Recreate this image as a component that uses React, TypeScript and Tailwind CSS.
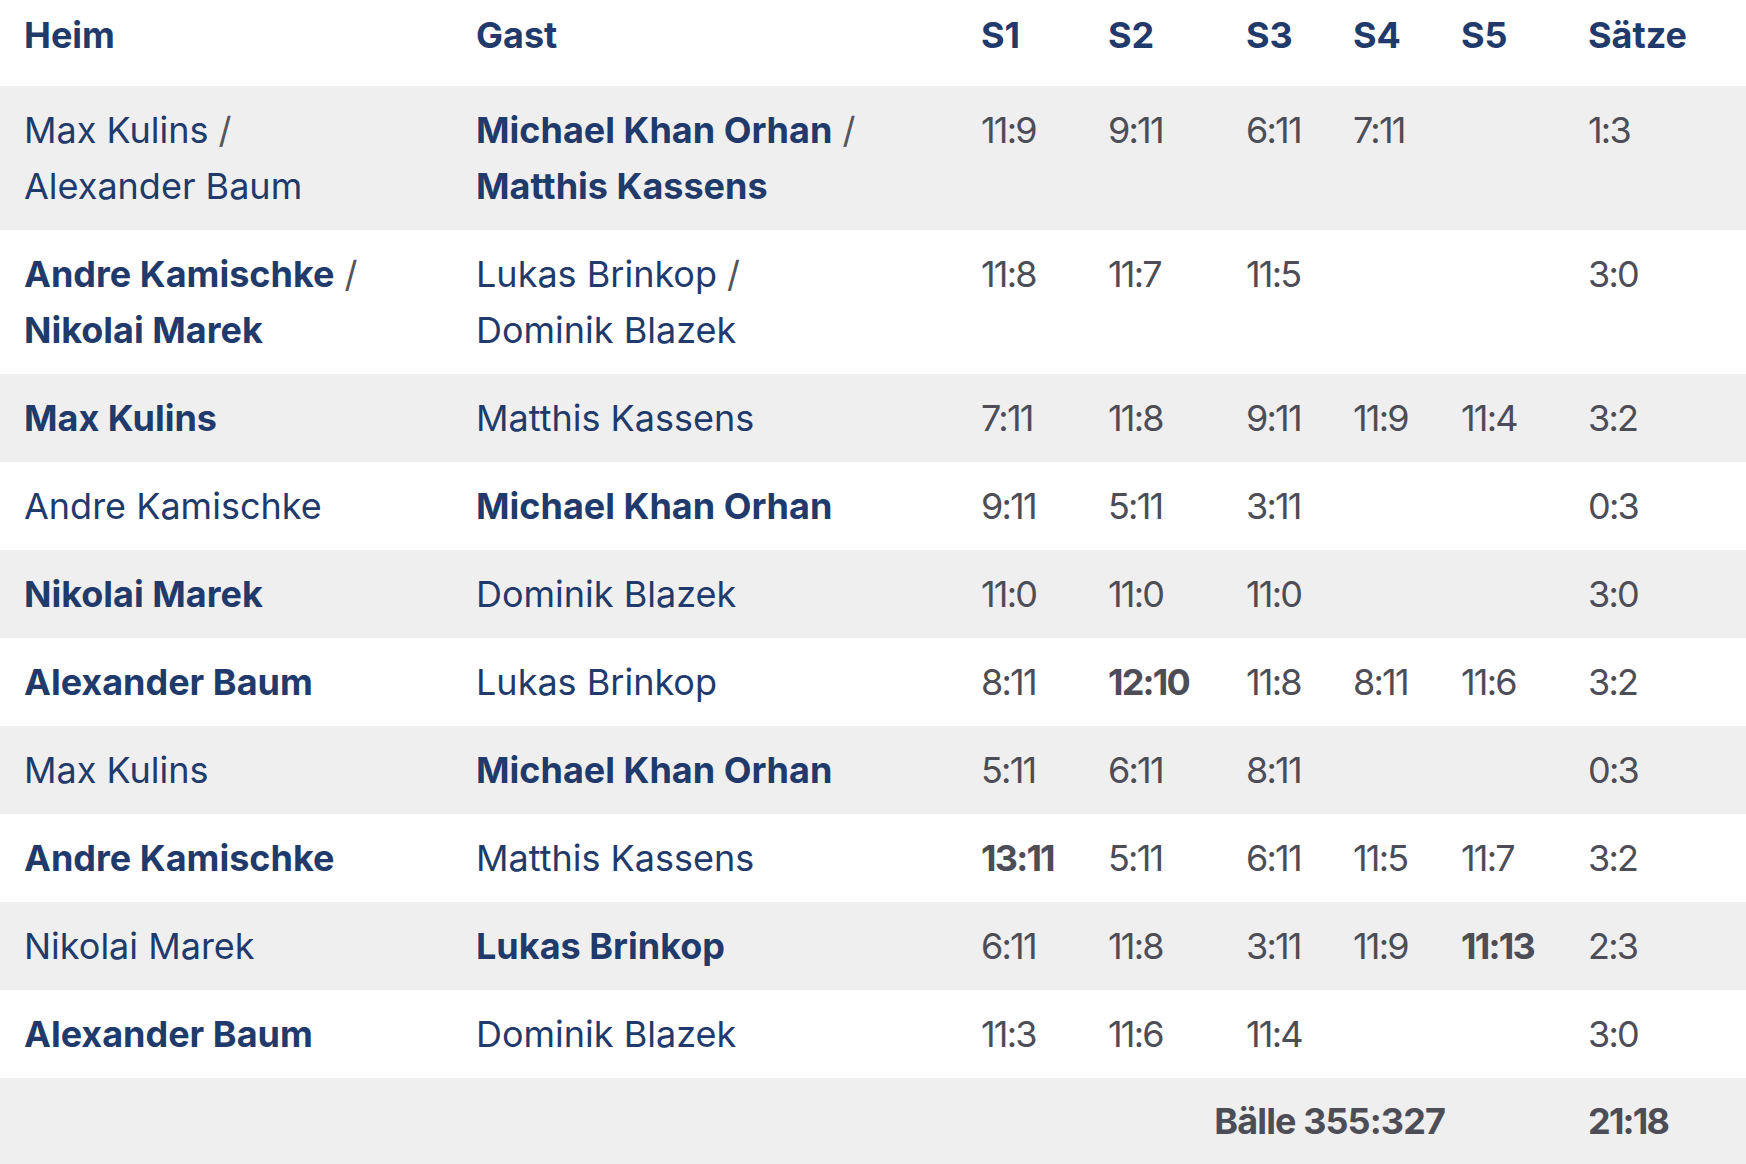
const COLS =
  "grid grid-cols-[452px_505px_127px_138px_107px_108px_127px_1fr] pl-[24px]";

type Name = { n: string; b?: boolean };
type Score = { s: string; b?: boolean } | null;

type Match = {
  home: Name[];
  away: Name[];
  sets: Score[];
  result: string;
};

const MATCHES: Match[] = [
  {
    home: [{ n: "Max Kulins" }, { n: "Alexander Baum" }],
    away: [
      { n: "Michael Khan Orhan", b: true },
      { n: "Matthis Kassens", b: true },
    ],
    sets: [{ s: "11:9" }, { s: "9:11" }, { s: "6:11" }, { s: "7:11" }, null],
    result: "1:3",
  },
  {
    home: [
      { n: "Andre Kamischke", b: true },
      { n: "Nikolai Marek", b: true },
    ],
    away: [{ n: "Lukas Brinkop" }, { n: "Dominik Blazek" }],
    sets: [{ s: "11:8" }, { s: "11:7" }, { s: "11:5" }, null, null],
    result: "3:0",
  },
  {
    home: [{ n: "Max Kulins", b: true }],
    away: [{ n: "Matthis Kassens" }],
    sets: [{ s: "7:11" }, { s: "11:8" }, { s: "9:11" }, { s: "11:9" }, { s: "11:4" }],
    result: "3:2",
  },
  {
    home: [{ n: "Andre Kamischke" }],
    away: [{ n: "Michael Khan Orhan", b: true }],
    sets: [{ s: "9:11" }, { s: "5:11" }, { s: "3:11" }, null, null],
    result: "0:3",
  },
  {
    home: [{ n: "Nikolai Marek", b: true }],
    away: [{ n: "Dominik Blazek" }],
    sets: [{ s: "11:0" }, { s: "11:0" }, { s: "11:0" }, null, null],
    result: "3:0",
  },
  {
    home: [{ n: "Alexander Baum", b: true }],
    away: [{ n: "Lukas Brinkop" }],
    sets: [{ s: "8:11" }, { s: "12:10", b: true }, { s: "11:8" }, { s: "8:11" }, { s: "11:6" }],
    result: "3:2",
  },
  {
    home: [{ n: "Max Kulins" }],
    away: [{ n: "Michael Khan Orhan", b: true }],
    sets: [{ s: "5:11" }, { s: "6:11" }, { s: "8:11" }, null, null],
    result: "0:3",
  },
  {
    home: [{ n: "Andre Kamischke", b: true }],
    away: [{ n: "Matthis Kassens" }],
    sets: [{ s: "13:11", b: true }, { s: "5:11" }, { s: "6:11" }, { s: "11:5" }, { s: "11:7" }],
    result: "3:2",
  },
  {
    home: [{ n: "Nikolai Marek" }],
    away: [{ n: "Lukas Brinkop", b: true }],
    sets: [{ s: "6:11" }, { s: "11:8" }, { s: "3:11" }, { s: "11:9" }, { s: "11:13", b: true }],
    result: "2:3",
  },
  {
    home: [{ n: "Alexander Baum", b: true }],
    away: [{ n: "Dominik Blazek" }],
    sets: [{ s: "11:3" }, { s: "11:6" }, { s: "11:4" }, null, null],
    result: "3:0",
  },
];

function Players({ names }: { names: Name[] }) {
  return (
    <div className="flex flex-col">
      {names.map((p, i) => (
        <span key={i} className={p.b ? "font-bold" : "font-normal"}>
          {p.n}
          {i < names.length - 1 && (
            <span className="font-normal text-[#55555d]"> /</span>
          )}
        </span>
      ))}
    </div>
  );
}

export default function App() {
  return (
    <div
      className="w-[1746px] h-[1164px] bg-white text-[36px] leading-[56px] text-[#1f3a6b] overflow-hidden"
      style={{ fontFamily: "Inter, 'Noto Sans', sans-serif" }}
    >
      {/* header */}
      <div className={`${COLS} h-[86px] pt-[7px] font-bold`}>
        <div>Heim</div>
        <div>Gast</div>
        <div>S1</div>
        <div>S2</div>
        <div>S3</div>
        <div>S4</div>
        <div>S5</div>
        <div>Sätze</div>
      </div>

      {MATCHES.map((m, i) => (
        <div
          key={i}
          className={`${COLS} py-[16px] ${i % 2 === 0 ? "bg-[#efefef]" : "bg-white"}`}
        >
          <Players names={m.home} />
          <Players names={m.away} />
          {m.sets.map((s, j) => (
            <div
              key={j}
              className={`text-[#4d4d57] tracking-[-0.05em] ${s?.b ? "font-bold" : "font-normal"}`}
            >
              {s ? s.s : ""}
            </div>
          ))}
          <div className="text-[#4d4d57] tracking-[-0.05em]">{m.result}</div>
        </div>
      ))}

      {/* totals */}
      <div className={`${COLS} h-[86px] items-center bg-[#efefef] font-bold text-[#4d4d57]`}>
        <div className="col-span-7 text-right pr-[143px] tracking-[-0.025em]">Bälle 355:327</div>
        <div className="tracking-[-0.05em]">21:18</div>
      </div>
    </div>
  );
}
